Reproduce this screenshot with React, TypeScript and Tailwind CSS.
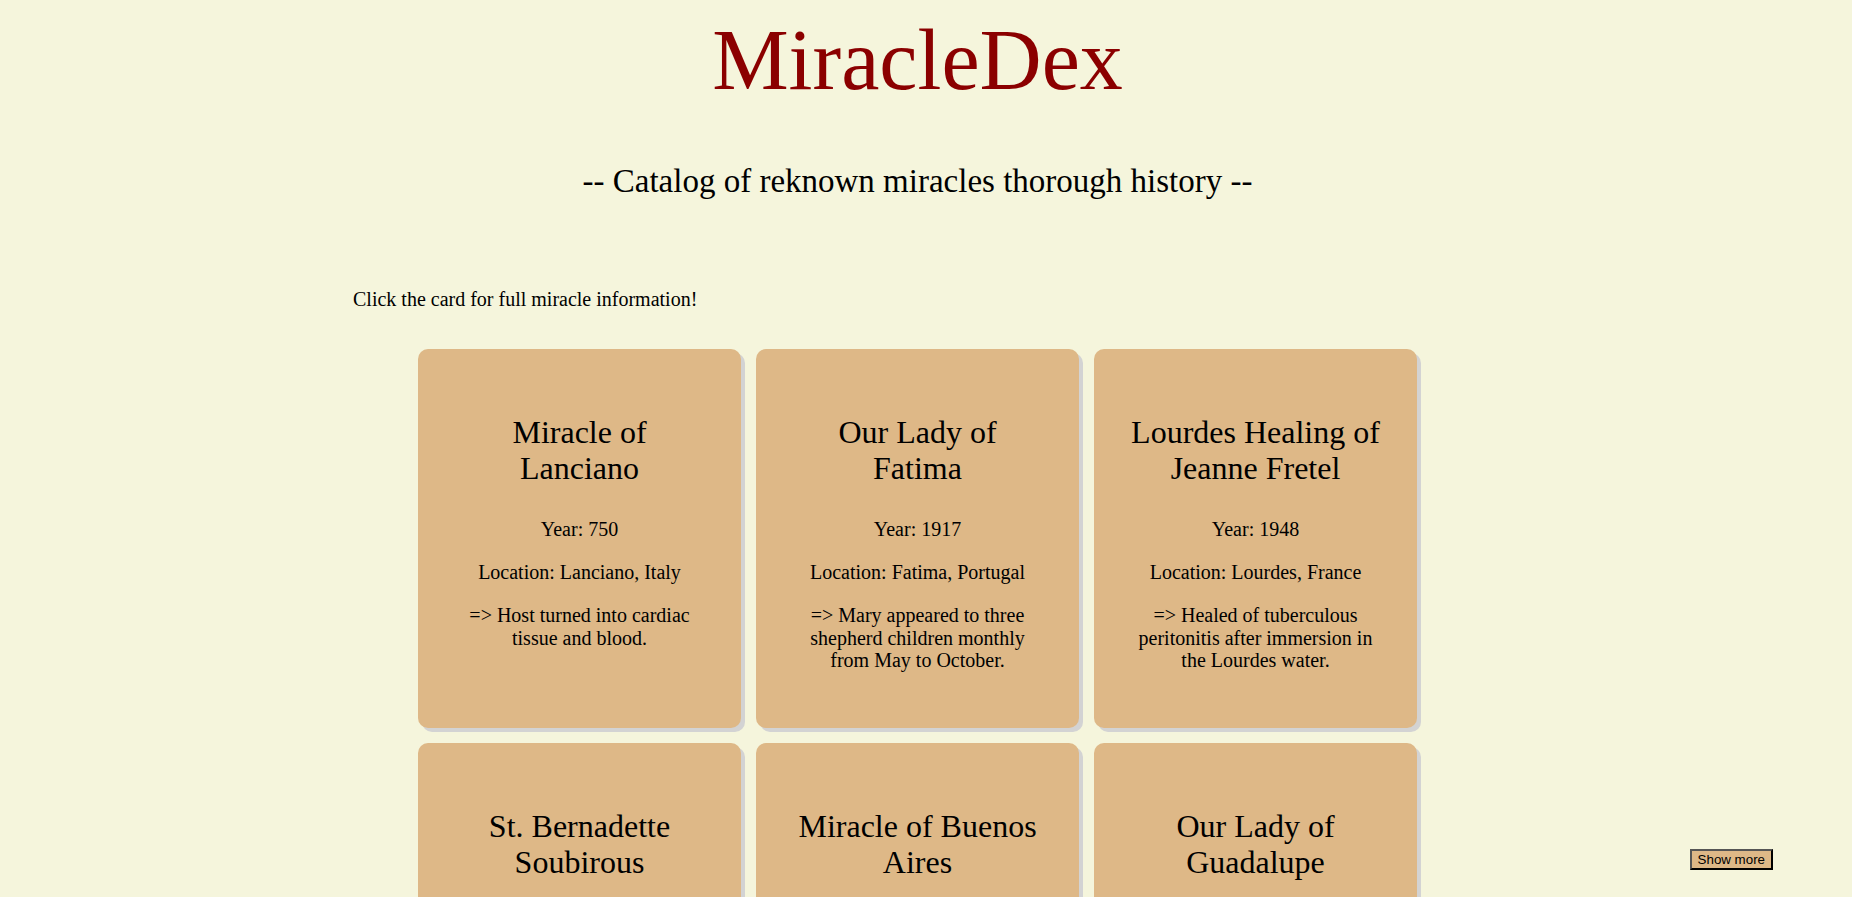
import React from 'react'

type Miracle = {
  name: string
  year: number
  location: string
  summary: string
}

const miracles: Miracle[] = [
  { name: 'Miracle of Lanciano', year: 750, location: 'Lanciano, Italy', summary: 'Host turned into cardiac tissue and blood.' },
  { name: 'Our Lady of Fatima', year: 1917, location: 'Fatima, Portugal', summary: 'Mary appeared to three shepherd children monthly from May to October.' },
  { name: 'Lourdes Healing of Jeanne Fretel', year: 1948, location: 'Lourdes, France', summary: 'Healed of tuberculous peritonitis after immersion in the Lourdes water.' },
  { name: 'St. Bernadette Soubirous', year: 1909, location: 'Nevers, France', summary: 'Body found incorrupt when exhumed thirty years after death.' },
  { name: 'Miracle of Buenos Aires', year: 1996, location: 'Buenos Aires, Argentina', summary: 'Discarded host became living heart muscle tissue.' },
  { name: 'Our Lady of Guadalupe', year: 1531, location: 'Mexico City, Mexico', summary: 'Image of Mary appeared on the tilma of Juan Diego.' },
]

function MiracleCard({ m }: { m: Miracle }) {
  return (
    <div className="h-[379px] w-[323px] cursor-pointer rounded-[10px] bg-[#deb887] px-[35px] pt-[65px] text-center text-black shadow-[4px_4px_0_#d3d3d3]">
      <h2 className="text-[32px] leading-[36px]">{m.name}</h2>
      <div className="mt-[32px] flex flex-col gap-[20.5px] text-[20px] leading-[22.5px]">
        <p>Year: {m.year}</p>
        <p>Location: {m.location}</p>
        <p>=&gt; {m.summary}</p>
      </div>
    </div>
  )
}

export default function App() {
  return (
    <div className="min-h-screen w-full bg-[#f5f5dc] pr-[17px] font-['Liberation_Serif','Times_New_Roman',serif] text-black">
      <header className="text-center">
        <h1 className="pt-[17px] text-[86px] leading-none text-[#8b0000]">MiracleDex</h1>
        <h3 className="mt-[60px] text-[33px] leading-[36px]">-- Catalog of reknown miracles thorough history --</h3>
      </header>

      <main className="mx-auto mt-[89px] w-[1129px] pb-10">
        <p className="text-[20px] leading-[22px]">Click the card for full miracle information!</p>
        <div className="mt-[39px] flex justify-center">
          <div className="grid grid-cols-3 gap-[15px]">
            {miracles.map((m) => (
              <MiracleCard key={m.name} m={m} />
            ))}
          </div>
        </div>
      </main>

      <button className="fixed bottom-[27px] right-[79px] border-2 border-b-black border-l-[#555] border-r-black border-t-[#555] bg-[#deb887] px-[6px] py-px font-['Liberation_Sans',Arial,sans-serif] text-[13.33px] leading-[15px] text-black">
        Show more
      </button>
    </div>
  )
}
